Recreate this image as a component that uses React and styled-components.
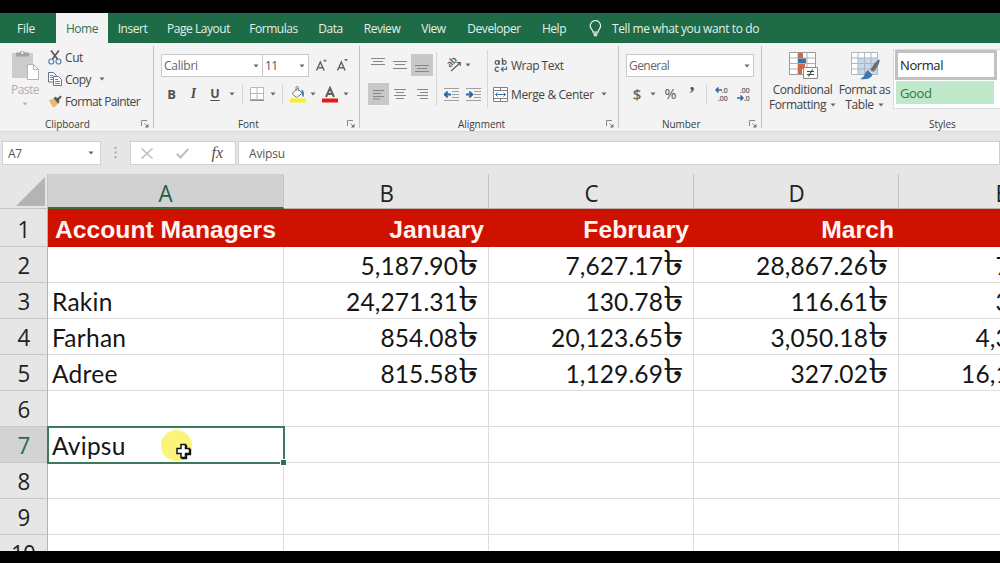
import React from "react";
import styled, { createGlobalStyle, css } from "styled-components";

const UI = `"Open Sans", "Noto Sans", sans-serif`;
const CELL = `Lato, "Open Sans", sans-serif`;

const GlobalStyle = createGlobalStyle`
  * { box-sizing: border-box; }
  body { margin: 0; background: #000; overflow: hidden; font-family: ${UI}; }
  svg { display: block; flex: none; }
`;

const Screen = styled.div`
  width: 1000px;
  height: 563px;
  padding: 13px 0 12px;
  background: #000;
  display: flex;
  flex-direction: column;
  overflow: hidden;
`;

/* ---- tab strip ---- */
const TabBar = styled.nav`
  flex: none;
  height: 30px;
  display: flex;
  align-items: stretch;
  background: #1e6b47;
`;
const Tab = styled.div`
  width: ${(p) => p.$w}px;
  padding-right: ${(p) => p.$pr ?? 0}px;
  display: flex;
  align-items: center;
  justify-content: center;
  font-size: 12px;
  letter-spacing: ${(p) => p.$ls ?? -0.45}px;
  white-space: nowrap;
  color: ${(p) => (p.$active ? "#2c7350" : "#e4f0e9")};
  background: ${(p) => (p.$active ? "#f3f3f3" : "transparent")};
`;
const TellMe = styled.div`
  display: flex;
  align-items: center;
  gap: 10px;
  margin-left: 12px;
  font-size: 12px;
  letter-spacing: -0.4px;
  color: #e4f0e9;
`;

/* ---- ribbon ---- */
const Ribbon = styled.div`
  flex: none;
  height: 88px;
  display: flex;
  background: #f3f3f3;
  color: #444;
`;
const Group = styled.section`
  flex: none;
  width: ${(p) => p.$w}px;
  padding: 0 0 0 ${(p) => p.$pl ?? 0}px;
  display: flex;
  flex-direction: column;
`;
const GroupRule = styled.div`
  flex: none;
  width: 1px;
  height: 82px;
  margin-top: 3px;
  background: #c4c4c4;
`;
const GroupBody = styled.div`
  height: 72px;
  display: flex;
`;
const GroupFooter = styled.div`
  height: 16px;
  display: flex;
  align-items: center;
  justify-content: space-between;
  padding-top: 1px;
  padding-left: ${(p) => p.$pl}px;
  padding-right: 4px;
  font-size: 10px;
  letter-spacing: -0.05px;
  color: #3c3c3c;
`;
const Stack = styled.div`
  display: flex;
  flex-direction: column;
  width: ${(p) => (p.$w ? p.$w + "px" : "auto")};
  padding-top: ${(p) => p.$pt ?? 0}px;
  gap: ${(p) => p.$gap ?? 0}px;
  align-items: ${(p) => p.$align ?? "stretch"};
`;
const Row = styled.div`
  height: ${(p) => p.$h ?? 22}px;
  display: flex;
  align-items: center;
`;
const Slot = styled.div`
  flex: none;
  width: ${(p) => p.$w}px;
  height: ${(p) => (p.$h ? p.$h + "px" : "auto")};
  display: flex;
  align-items: center;
  justify-content: center;
  background: ${(p) => (p.$on ? "#c8c8c8" : "transparent")};
`;
const Text = styled.span`
  font-size: ${(p) => p.$size ?? 12}px;
  line-height: 15px;
  letter-spacing: ${(p) => p.$ls ?? -0.4}px;
  color: ${(p) => p.$color ?? "#444"};
  white-space: nowrap;
  margin-left: ${(p) => p.$ml ?? 0}px;
`;
const Glyph = styled.span`
  font: ${(p) => p.$font};
  color: ${(p) => p.$color ?? "#505050"};
  line-height: ${(p) => p.$lh ?? 18}px;
  text-decoration: ${(p) => (p.$under ? "underline" : "none")};
  text-underline-offset: 2px;
`;
const ThinRule = styled.div`
  width: 1px;
  height: ${(p) => p.$h}px;
  background: #d6d6d6;
`;
const Combo = styled.div`
  flex: none;
  width: ${(p) => p.$w}px;
  height: 23px;
  margin-left: ${(p) => p.$ml ?? 0}px;
  padding: 0 3px 0 2px;
  display: flex;
  align-items: center;
  justify-content: space-between;
  border: 1px solid #c9c9c9;
  background: #fff;
`;
const Command = styled.div`
  width: ${(p) => p.$w}px;
  padding-top: 9px;
  display: flex;
  flex-direction: column;
  align-items: center;
`;
const CommandLine = styled.div`
  display: flex;
  align-items: center;
  gap: 4px;
  height: 15px;
`;
const Gallery = styled.div`
  flex: none;
  width: 122px;
  height: 60px;
  margin-top: 6px;
  padding: 1px 0 0 1px;
  display: grid;
  grid-template-columns: 102px 100px;
  grid-template-rows: 29px 24px;
  row-gap: 0;
  column-gap: 2px;
  background: #fff;
  border: 1px solid #dcdcdc;
`;
const StyleTile = styled.div`
  display: flex;
  align-items: center;
  padding-left: ${(p) => (p.$selected ? 2 : 4)}px;
  margin: ${(p) => (p.$selected ? "-1px 0 0" : "1px 3px 0 1px")};
  font-size: 13px;
  letter-spacing: -0.4px;
  color: ${(p) => p.$fg};
  background: ${(p) => p.$bg};
  ${(p) => p.$selected && css`border: 3px solid #c2c2c2;`}
`;

/* ---- formula bar ---- */
const FormulaBar = styled.div`
  flex: none;
  height: 43px;
  padding: 9px 0 0 2px;
  display: flex;
  border-top: 1px solid #dadada;
  background: #e6e6e6;
`;
const Field = styled.div`
  flex: none;
  width: ${(p) => p.$w}px;
  height: 24px;
  margin-left: ${(p) => p.$ml ?? 0}px;
  padding: 0 ${(p) => p.$pr ?? 0}px 0 ${(p) => p.$pl}px;
  display: flex;
  align-items: center;
  justify-content: space-between;
  border: 1px solid #cfcfcf;
  background: #fff;
`;
const Handle = styled.div`
  width: 29px;
  height: 24px;
  display: flex;
  align-items: center;
  justify-content: center;
`;

/* ---- sheet ---- */
const Sheet = styled.div`
  flex: 1;
  width: 1104px;
  display: grid;
  grid-template-columns: 48px 236px 205px 205px 205px 205px;
  grid-template-rows: 35px 38px repeat(9, 36px);
  overflow: hidden;
  background: #fff;
  position: relative;
`;
const Corner = styled.div`
  background: #e6e6e6;
  border-right: 1px solid #c4c4c4;
  border-bottom: 1px solid #c4c4c4;
  display: flex;
  justify-content: flex-end;
  align-items: flex-end;
  padding: 0 2px 2px 0;
`;
const ColHead = styled.div`
  display: flex;
  align-items: center;
  justify-content: center;
  padding-top: 4px;
  padding-left: 1px;
  font: 24px ${UI};
  line-height: 30px;
  color: ${(p) => (p.$active ? "#1f5e41" : "#222")};
  background: ${(p) => (p.$active ? "#d1d1d1" : "#e6e6e6")};
  border-right: 1px solid #c4c4c4;
  border-bottom: ${(p) => (p.$active ? "2px solid #3f6b3a" : "1px solid #b9b0ae")};
`;
const HeadText = styled.span`
  transform: scaleX(0.93);
`;
const RowHead = styled.div`
  display: flex;
  align-items: center;
  justify-content: center;
  padding-top: ${(p) => (p.$first ? 1 : 0)}px;
  font: 24px ${UI};
  letter-spacing: -0.6px;
  color: ${(p) => (p.$active ? "#2c6b4c" : "#222")};
  background: ${(p) => (p.$active ? "#d3d3d3" : "#e6e6e6")};
  border-right: 1px solid #b4b4b4;
  border-bottom: 1px solid #c8c8c8;
`;
const Cell = styled.div`
  display: flex;
  align-items: center;
  justify-content: ${(p) => (p.$num ? "flex-end" : "flex-start")};
  padding: ${(p) => (p.$num ? "2px 12px 0 0" : "1px 0 0 4px")};
  font: 24.5px ${CELL};
  letter-spacing: ${(p) => (p.$num ? 0.12 : 0.25)}px;
  color: #151515;
  white-space: nowrap;
  border-right: 1px solid #dcdcdc;
  border-bottom: 1px solid #dcdcdc;
`;
const Taka = styled.span`
  width: 18px;
  height: 33px;
  display: flex;
  align-items: center;
  justify-content: flex-end;
  font-size: 35px;
  letter-spacing: 0;
  line-height: 33px;
  transform: translate(2px, -4px) scaleX(1.2);
  transform-origin: right center;
`;
const HeadCell = styled.div`
  display: flex;
  align-items: center;
  justify-content: ${(p) => (p.$num ? "flex-end" : "flex-start")};
  padding: 4px 5px 0 7px;
  font: bold 24.7px "Liberation Sans", Arial, sans-serif;
  color: #fff4f0;
  background: #cf1200;
`;
const Selection = styled.div`
  position: absolute;
  left: 47px;
  top: 252px;
  width: 238px;
  height: 38px;
  border: 2px solid #3d7a5d;
`;
const FillHandle = styled.div`
  position: absolute;
  right: -3px;
  bottom: -3px;
  width: 5px;
  height: 5px;
  background: #2f7050;
  outline: 1px solid #fff;
`;
const Pointer = styled.div`
  position: absolute;
  left: 161px;
  top: 256px;
`;

const Caret = ({ light }) => (
  <svg width="6" height="4" viewBox="0 0 6 4">
    <path d="M.5.5h5L3 3.500z" fill={light ? "#b5b5b5" : "#666"} />
  </svg>
);
const Launcher = () => (
  <svg width="8" height="8" viewBox="0 0 8 8" fill="none" stroke="#888" strokeWidth="1">
    <path d="M.5 6V.5H6M3.500 3.500l3 3" />
    <path d="M7.500 3.800v3.700H3.800z" fill="#777" stroke="none" />
  </svg>
);
const Bulb = () => (
  <svg width="13" height="17" viewBox="0 0 13 17" fill="none" stroke="#e4f0e9" strokeWidth="1.300">
    <path d="M4 12.200C4 9.600 1.200 9 1.200 5.800a5.100 5.100 0 0 1 10.400 0C11.600 9 9 9.600 9 12.200z" />
    <path d="M4.300 14h4.400M5 15.700h3" />
  </svg>
);
const PasteIcon = () => (
  <svg width="28" height="31" viewBox="0 0 28 31">
    <path d="M1 3h21v25H1z" fill="#cdcbcd" />
    <path d="M5 2.500h3.500a3 3 0 0 1 5.500 0H18v4H5z" fill="#a3a3a3" />
    <circle cx="11.300" cy="2.700" r="1.200" fill="#f3f3f3" />
    <path d="M16.500 14.500h6l5 5v10h-11z" fill="#fff" stroke="#b3b3b3" />
    <path d="M22.500 14.500v5h5" fill="none" stroke="#b3b3b3" />
  </svg>
);
const CutIcon = () => (
  <svg width="14" height="15" viewBox="0 0 14 15" fill="none">
    <path d="M3 .5 9.800 9.500M10.800.5 4.200 9.500" stroke="#5a5a5a" strokeWidth="1.700" />
    <circle cx="3.300" cy="11.500" r="2.500" stroke="#5585b5" strokeWidth="1.200" />
    <circle cx="10.500" cy="11.500" r="2.500" stroke="#5585b5" strokeWidth="1.200" />
  </svg>
);
const CopyIcon = () => (
  <svg width="14" height="14" viewBox="0 0 14 14" fill="#fff" stroke="#5f7890" strokeWidth="1">
    <path d="M.5.5h5l2.500 2.500v7H.5z" />
    <path d="M2 3.500h3M2 5.500h3M2 7.500h3" stroke="#5b8fc2" />
    <path d="M5.500 4.500h5l3 3v6h-8z" />
    <path d="M7 7.500h3M7 9.500h5M7 11.500h5" stroke="#5b8fc2" />
  </svg>
);
const BrushIcon = () => (
  <svg width="14" height="13" viewBox="0 0 14 13">
    <path d="M.8 5.300 6 3.500l4.500 5L6 12.500 4 11z" fill="#e9b877" />
    <path d="m5.500 3 2-1.200 2 1.500L12.500.5l1.300 1.400-3 3 .7 2-1.500 1.600z" fill="#555" />
  </svg>
);
const GrowIcon = ({ down }) => (
  <svg width="14" height="16" viewBox="0 0 14 16">
    <path d="M1.500 12.500 5.300 4 9.100 12.500M2.900 9.800h4.800" fill="none" stroke="#666" strokeWidth="1.500" />
    <path d={down ? "M8 1h4L10 3.500z" : "M8 3.500h4L10 1z"} fill="#4a78ad" />
  </svg>
);
const BordersIcon = () => (
  <svg width="14" height="14" viewBox="0 0 14 14" fill="#fff" stroke="#b8b8b8">
    <path d="M.5.5h13v12H.5z" />
    <path d="M7 1v12M1 6.500h12" />
    <path d="M0 13.300h14" stroke="#777" />
  </svg>
);
const BucketIcon = () => (
  <svg width="17" height="17" viewBox="0 0 17 17">
    <path d="M3 7.500 8.500 2.500l4.700 4.800-5.700 4.200z" fill="#fff" stroke="#777" />
    <path d="M7 5V1.500c0-1.300 2.300-1.300 2.300 0V5" fill="none" stroke="#777" />
    <path d="M12 3.500c3.500 1 3.200 4 2.600 7.500-1.400-.6-1.800-2-1.400-4z" fill="#4a78ad" />
    <path d="M1 12.500h16v4H1z" fill="#f8ee2e" />
  </svg>
);
const FontColorIcon = () => (
  <svg width="16" height="17" viewBox="0 0 16 17">
    <path d="M4 11 8 2 12 11M5.300 8h5.400" fill="none" stroke="#606060" strokeWidth="2" />
    <path d="M0 12.500h16v4H0z" fill="#e01f14" />
  </svg>
);
const Lines = ({ d }) => (
  <svg width="15" height="16" viewBox="0 0 15 16" stroke="#858585" strokeWidth="1" fill="none">
    <path d={d} />
  </svg>
);
const OrientIcon = () => (
  <svg width="18" height="18" viewBox="-2 -2 18 18" fill="none" stroke="#5c5c5c" strokeWidth="1.200">
    <text transform="translate(4 10) rotate(-45)" fontSize="9.500" fontFamily="Open Sans" fontWeight="600" letterSpacing="-.5" fill="#5c5c5c" stroke="none">ab</text>
    <path d="M5 13 14 5M14.200 8V4.700h-3.400" />
  </svg>
);
const IndentIcon = ({ right }) => (
  <svg width="15" height="13" viewBox="0 0 15 13" fill="none">
    <path d="M0 .5h15M8 3.500h7M8 6.500h7M8 9.500h7M0 12.500h15" stroke="#a0a0a0" />
    <path d={right ? "M0 6.500h6M3.300 3.600l3 2.900-3 2.900" : "M7 6.500H1M3.700 3.600l-3 2.900 3 2.900"} stroke="#2f66a5" strokeWidth="2" />
  </svg>
);
const WrapIcon = () => (
  <svg width="14" height="15" viewBox="0 0 14 15" fill="none">
    <g stroke="#5a5a5a" strokeWidth="1.200">
      <circle cx="3" cy="4.500" r="1.800" />
      <path d="M5.200 2.300v4.500M8.400 0v6.800" />
      <circle cx="10.400" cy="4.500" r="1.800" />
      <path d="M4.700 9.700c-2-1.300-3.600 0-3.600 1.600s1.800 2.800 3.600 1.500" />
    </g>
    <path d="M12.500 8.500v2.800H7.500M9.500 9l-2.300 2.300 2.300 2.300" stroke="#4a78ad" strokeWidth="1.300" />
  </svg>
);
const MergeIcon = () => (
  <svg width="15" height="15" viewBox="0 0 15 15" fill="#fff" stroke="#808080">
    <path d="M.5.5h14v14H.5zM.5 3.500h14M.5 11.500h14M7.500.5v3M7.500 11.500v3" />
    <path d="M2.500 7.500h10M4.500 5.500 2.500 7.500l2 2M10.500 5.500l2 2-2 2" stroke="#3a70ab" fill="none" />
  </svg>
);
const DecimalArt = styled.div`
  display: flex;
  flex-direction: column;
  align-items: flex-end;
  width: 13px;
  font: 600 7.5px ${UI};
  line-height: 8px;
  letter-spacing: -0.3px;
  color: #6a6a6a;
`;
const DecimalLine = styled.div`
  height: 8px;
  display: flex;
  align-items: center;
`;
const TinyArrow = ({ right }) => (
  <svg width="7" height="6" viewBox="0 0 7 6" fill="none" stroke="#2f66a5" strokeWidth="1.500">
    <path d={right ? "M0 3h6M3.500.5 6 3 3.500 5.500" : "M7 3H1M3.500.5 1 3l2.500 2.500"} />
  </svg>
);
const ConditionalIcon = () => (
  <svg width="30" height="28" viewBox="-1 0 30 28">
    <path d="M.5.5h26v22H.5z" fill="#fff" stroke="#9a9a9a" />
    <path d="M.5 6h26M.5 11.500h26M.5 17h26M9 .5v22M18 .5v22" stroke="#b0b0b0" />
    <path d="M9 1h5v5H9zM9 12h7v5H9zM9 17h4v5H9z" fill="#d0674a" />
    <path d="M9 6.500h8V11H9z" fill="#3e6fa4" />
    <path d="M14.500 15.500h14v11h-14z" fill="#fff" stroke="#8a8a8a" />
    <path d="M18 19.500h7M18 22.500h7M23.500 17.500l-4 7" stroke="#444" strokeWidth="1.100" />
  </svg>
);
const TableIcon = () => (
  <svg width="30" height="28" viewBox="-1 0 30 28">
    <path d="M.5.5h26v22H.5z" fill="#fff" />
    <path d="M7 6h19.500v16.500H7z" fill="#c3d9ee" />
    <path d="M.5.5h26v22H.5zM.5 6h26M.5 11.500h26M.5 17h26M7 .5v22M13.500 .5v22M20 .5v22" stroke="#aeb6bf" fill="none" />
    <path d="M28.500 7.500c.8 3-2.500 8-6 12.500l-3-2.500c3-4.500 5.500-9 9-10z" fill="#6e6e6e" />
    <path d="M18.500 18.500c3 .5 4 3.500 2 6-2.500 3-7 3-11.500 2.500 3.500-1.500 4-3 5-5.500s2.500-3.300 4.500-3z" fill="#3f77b0" />
    <path d="m18.300 18.700 3.400 3" stroke="#f3f3f3" strokeWidth="1.200" />
  </svg>
);
const CrossPointer = () => (
  <svg width="32" height="34" viewBox="0 0 32 34">
    <circle cx="15.500" cy="15.500" r="15.500" fill="#fbf37a" />
    <path d="M20 14.500h4.500v4h4v5h-4v4H20v-4h-4v-5h4z" fill="#fff" stroke="#151515" strokeWidth="1.500" />
    <path d="M25.500 15v3M29.500 19v5.500h-4V28.500h-5" fill="none" stroke="#151515" strokeWidth="1.400" />
  </svg>
);

const TABS = [
  ["Insert", 49, -0.45],
  ["Page Layout", 83],
  ["Formulas", 67],
  ["Data", 47],
  ["Review", 56],
  ["View", 47],
  ["Developer", 74],
  ["Help", 46],
];
const COLS = ["A", "B", "C", "D", "E"];
const ROWS = [
  ["", "5,187.90", "7,627.17", "28,867.26", "754.30"],
  ["Rakin", "24,271.31", "130.78", "116.61", "312.45"],
  ["Farhan", "854.08", "20,123.65", "3,050.18", "4,322.10"],
  ["Adree", "815.58", "1,129.69", "327.02", "16,184.20"],
  ["", "", "", "", ""],
  ["Avipsu", "", "", "", ""],
  ["", "", "", "", ""],
  ["", "", "", "", ""],
  ["", "", "", "", ""],
];

export default function App() {
  return (
    <Screen>
      <GlobalStyle />
      <TabBar>
        <Tab $w={56} $pr={4} $ls={-0.2}>File</Tab>
        <Tab $w={52} $active>Home</Tab>
        {TABS.map(([name, w, ls]) => (
          <Tab key={name} $w={w} $ls={ls}>{name}</Tab>
        ))}
        <TellMe>
          <Bulb />
          Tell me what you want to do
        </TellMe>
      </TabBar>

      <Ribbon>
        <Group $w={153}>
          <GroupBody>
            <Stack $w={50} $pt={7} $align="center">
              <PasteIcon />
              <Row $h={1} />
              <Text $color="#b0b0b0" $ls={-0.5}>Paste</Text>
              <Slot $w={10} $h={14}><Caret light /></Slot>
            </Stack>
            <Stack $pt={4}>
              <Row $h={21.5}><Slot $w={10}><CutIcon /></Slot><Text $ml={5}>Cut</Text></Row>
              <Row $h={21.5}><Slot $w={10}><CopyIcon /></Slot><Text $ml={5} $ls={-0.5}>Copy</Text><Slot $w={22}><Caret /></Slot></Row>
              <Row $h={22.5}><Slot $w={10}><BrushIcon /></Slot><Text $ml={5} $ls={-0.62}>Format Painter</Text></Row>
            </Stack>
          </GroupBody>
          <GroupFooter $pl={45}>Clipboard<Launcher /></GroupFooter>
        </Group>
        <GroupRule />

        <Group $w={205} $pl={7}>
          <Stack $pt={11} $gap={5}>
            <Row $h={23}>
              <Combo $w={102}><Text $color="#666" $ls={-0.25}>Calibri</Text><Caret /></Combo>
              <Combo $w={47} $ml={-1}><Text $color="#555" $ls={-0.5}>11</Text><Caret /></Combo>
              <Slot $w={26}><GrowIcon /></Slot>
              <Slot $w={16}><GrowIcon down /></Slot>
            </Row>
            <Row $h={24}>
              <Slot $w={21}><Glyph $font={`700 13px ${UI}`}>B</Glyph></Slot>
              <Slot $w={23}><Glyph $font={`italic 700 14px "Liberation Serif", serif`}>I</Glyph></Slot>
              <Slot $w={20}><Glyph $font={`700 12.5px ${UI}`} $under>U</Glyph></Slot>
              <Slot $w={14}><Caret /></Slot>
              <Slot $w={6}><ThinRule $h={20} /></Slot>
              <Slot $w={23}><BordersIcon /></Slot>
              <Slot $w={10}><Caret /></Slot>
              <Slot $w={8}><ThinRule $h={20} /></Slot>
              <Slot $w={22}><BucketIcon /></Slot>
              <Slot $w={10}><Caret /></Slot>
              <Slot $w={24}><FontColorIcon /></Slot>
              <Slot $w={8}><Caret /></Slot>
            </Row>
          </Stack>
          <Row $h={9} />
          <GroupFooter $pl={77}>Font<Launcher /></GroupFooter>
        </Group>
        <GroupRule />

        <Group $w={258} $pl={8}>
          <GroupBody>
            <Stack $pt={11} $gap={7}>
              <Row $h={22}>
                <Slot $w={21}><Lines d="M0 1.500h14M2 4.500h10M0 7.500h14" /></Slot>
                <Slot $w={22}><Lines d="M0 4.500h14M2 7.500h10M0 11.500h14" /></Slot>
                <Slot $w={22} $h={22} $on><Lines d="M0 8.500h14M2 11.500h10M0 14.500h14" /></Slot>
              </Row>
              <Row $h={22}>
                <Slot $w={21} $h={22} $on><Lines d="M2 4.500h11M2 7.500h8M2 10.500h11M2 13h7" /></Slot>
                <Slot $w={23}><Lines d="M1 3.500h12M3 6.500h8M1 9.500h12M3 12.500h8" /></Slot>
                <Slot $w={21}><Lines d="M2 3.500h11M5 6.500h8M2 9.500h11M5 12.500h8" /></Slot>
              </Row>
            </Stack>
            <Slot $w={7}><ThinRule $h={54} /></Slot>
            <Stack $pt={11} $gap={7}>
              <Row><Slot $w={25}><OrientIcon /></Slot><Caret /></Row>
              <Row><Slot $w={22}><IndentIcon /></Slot><Slot $w={22}><IndentIcon right /></Slot></Row>
            </Stack>
            <Slot $w={7}><ThinRule $h={58} /></Slot>
            <Stack $pt={11} $gap={7}>
              <Row><Slot $w={19}><WrapIcon /></Slot><Text $ml={1} $ls={-0.5}>Wrap Text</Text></Row>
              <Row><Slot $w={18}><MergeIcon /></Slot><Text $ml={2}>Merge &amp; Center</Text><Slot $w={20}><Caret /></Slot></Row>
            </Stack>
          </GroupBody>
          <GroupFooter $pl={90}>Alignment<Launcher /></GroupFooter>
        </Group>
        <GroupRule />

        <Group $w={142} $pl={7}>
          <Stack $pt={11} $gap={5}>
            <Row $h={23}>
              <Combo $w={128}><Text $color="#666" $ls={-0.55}>General</Text><Caret /></Combo>
            </Row>
            <Row $h={24}>
              <Slot $w={22}><Glyph $font={`600 15px ${UI}`} $color="#666">$</Glyph></Slot>
              <Slot $w={10}><Caret /></Slot>
              <Slot $w={25}><Glyph $font={`14.5px ${UI}`} $color="#555">%</Glyph></Slot>
              <Slot $w={18} $h={12}><Glyph $font={`700 19px "Liberation Serif", serif`} $lh={34}>’</Glyph></Slot>
              <Slot $w={11}><ThinRule $h={20} /></Slot>
              <Slot $w={18}>
                <DecimalArt>
                  <DecimalLine><TinyArrow />.0</DecimalLine>
                  <DecimalLine>.00</DecimalLine>
                </DecimalArt>
              </Slot>
              <Slot $w={26}>
                <DecimalArt>
                  <DecimalLine>.00</DecimalLine>
                  <DecimalLine><TinyArrow right />.0</DecimalLine>
                </DecimalArt>
              </Slot>
            </Row>
          </Stack>
          <Row $h={9} />
          <GroupFooter $pl={36}>Number<Launcher /></GroupFooter>
        </Group>
        <GroupRule />

        <Group $w={260} $pl={7}>
          <GroupBody>
            <Command $w={67}>
              <ConditionalIcon />
              <Row $h={2} />
              <Text>Conditional</Text>
              <CommandLine><Text $ls={-0.45}>Formatting</Text><Caret /></CommandLine>
            </Command>
            <Command $w={57}>
              <TableIcon />
              <Row $h={2} />
              <Text $ls={-0.5}>Format as</Text>
              <CommandLine><Text>Table</Text><Caret /></CommandLine>
            </Command>
            <Gallery>
              <StyleTile $selected $fg="#222" $bg="#fff">Normal</StyleTile>
              <StyleTile $fg="#222" $bg="#f7c6cd" />
              <StyleTile $fg="#2d7a35" $bg="#c0e8cb">Good</StyleTile>
              <StyleTile $fg="#222" $bg="#fbe9a0" />
            </Gallery>
          </GroupBody>
          <GroupFooter $pl={160}>Styles</GroupFooter>
        </Group>
      </Ribbon>

      <FormulaBar>
        <Field $w={99} $pl={5} $pr={6}><Text $color="#555">A7</Text><Caret /></Field>
        <Handle>
          <svg width="3" height="12" viewBox="0 0 3 12" fill="#a6a6a6">
            <path d="M.5 0h2v2h-2zM.5 4.500h2v2h-2zM.5 9h2v2h-2z" />
          </svg>
        </Handle>
        <Field $w={106} $pl={10} $pr={12}>
          <svg width="12" height="11" viewBox="0 0 12 11" stroke="#bdbdbd" strokeWidth="1.500"><path d="m.5.5 11 10M11.500.5.5 10.500" /></svg>
          <svg width="13" height="11" viewBox="0 0 13 11" stroke="#bdbdbd" strokeWidth="2" fill="none"><path d="m.8 5.800 3.700 3.700L12.300.8" /></svg>
          <Glyph $font={`italic 16px "Liberation Serif", serif`}>fx</Glyph>
        </Field>
        <Field $w={762} $ml={2} $pl={10}><Text $color="#555" $ls={-0.2}>Avipsu</Text></Field>
      </FormulaBar>

      <Sheet>
        <Corner>
          <svg width="29" height="29" viewBox="0 0 29 29"><path d="M29 0v29H0z" fill="#b4b4b4" /></svg>
        </Corner>
        {COLS.map((c, i) => (
          <ColHead key={c} $active={i === 0}><HeadText>{c}</HeadText></ColHead>
        ))}
        <RowHead $first><HeadText>1</HeadText></RowHead>
        <HeadCell>Account Managers</HeadCell>
        <HeadCell $num>January</HeadCell>
        <HeadCell $num>February</HeadCell>
        <HeadCell $num>March</HeadCell>
        <HeadCell />
        {ROWS.map((cells, r) => (
          <React.Fragment key={r}>
            <RowHead $active={r === 5}><HeadText>{r + 2}</HeadText></RowHead>
            {cells.map((v, c) => (
              <Cell key={c} $num={c > 0}>{v}{c > 0 && v ? <Taka>৳</Taka> : null}</Cell>
            ))}
          </React.Fragment>
        ))}
        <Selection><FillHandle /></Selection>
        <Pointer><CrossPointer /></Pointer>
      </Sheet>
    </Screen>
  );
}
